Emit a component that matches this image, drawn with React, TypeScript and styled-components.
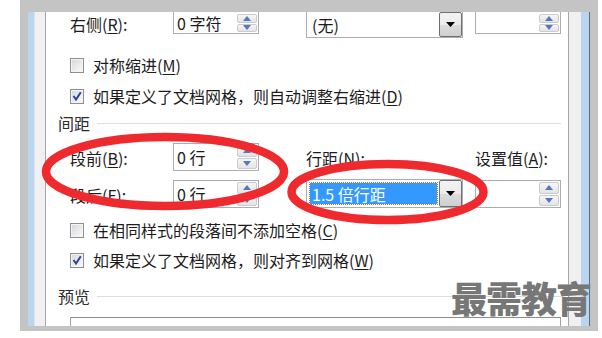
import React from 'react';
import styled, { createGlobalStyle } from 'styled-components';

const Global = createGlobalStyle`
  html, body { margin: 0; padding: 0; background: #fff; }
  body {
    font-family: "Noto Sans CJK SC", "Noto Sans", sans-serif;
    color: #1c1c1c;
  }
`;

const Page = styled.div`
  position: relative;
  width: 602px;
  height: 338px;
  overflow: hidden;
  background: #fff;
`;

const Frame = styled.div`
  margin-left: 20px;
  width: 578px;
  height: 331px;
  box-sizing: border-box;
  padding: 12px 8px 5px 8px;
  background: #c4c4c4;
  display: flex;
`;

const Stripe = styled.div<{ w: number }>`
  width: ${(p) => p.w}px;
  flex: none;
  background: #bad5ef;
`;

const SidePanel = styled.div<{ side: 'left' | 'right' }>`
  flex: none;
  width: ${(p) => (p.side === 'left' ? 10 : 12)}px;
  background: #f0f0f0;
  ${(p) =>
    p.side === 'left'
      ? 'border-right: 1px solid #a6a6a6; border-left: 1px solid #dde2e8;'
      : 'border-left: 1px solid #a6a6a6;'}
`;

const EdgeLine = styled.div`
  width: 1px;
  flex: none;
  background: #5d6b7c;
`;

const Main = styled.div`
  flex: 1;
  background: #fff;
  overflow: hidden;
  padding-left: 12px;
  display: flex;
  flex-direction: column;
  font-size: 16px;
  line-height: 20px;
`;

// the first row's boxes run up under the window's top edge, so that row is shorter
// than its boxes and they hang from its bottom
const FieldGrid = styled.div<{ top: number; row: number }>`
  display: grid;
  grid-template-columns: 103px 86px 47px 157px 12px 86px;
  grid-auto-rows: ${(p) => p.row}px;
  row-gap: 9px;
  align-items: end;
  padding-left: 12px;
  margin-top: ${(p) => p.top}px;
`;

const Label = styled.div<{ col: number }>`
  grid-column: ${(p) => p.col};
  align-self: center;
  white-space: nowrap;
  line-height: 18px;
  padding-top: 1px;
`;

const SpinBox = styled.div<{ col?: number; low?: boolean }>`
  grid-column: ${(p) => p.col ?? 2};
  height: 28px;
  box-sizing: border-box;
  border: 1px solid #abadb3;
  display: flex;
  align-items: center;
  padding-left: 3px;
  padding-top: ${(p) => (p.low ? 6 : 0)}px;
`;

const SpinValue = styled.span`
  flex: 1;
  white-space: nowrap;
  line-height: 18px;
`;

const SpinButtons = styled.div`
  width: 20px;
  margin-right: 1px;
  align-self: stretch;
  padding: 1px 0;
  display: flex;
  flex-direction: column;
  gap: 1px;
`;

const SpinBtn = styled.div`
  flex: 1;
  border: 1px solid #c9cbcf;
  border-radius: 2px;
  background: linear-gradient(#f6f6f6, #e4e4e4);
  display: flex;
  align-items: center;
  justify-content: center;
`;

const Combo = styled.div<{ low?: boolean }>`
  grid-column: 4;
  height: ${(p) => (p.low ? 33 : 29)}px;
  margin-bottom: ${(p) => (p.low ? -4 : 0)}px;
  box-sizing: border-box;
  border: 1px solid #abadb3;
  display: flex;
  align-items: center;
  padding-top: ${(p) => (p.low ? 6 : 0)}px;
`;

const ComboText = styled.div<{ selected?: boolean }>`
  flex: 1;
  align-self: stretch;
  margin: 3px 2px 3px 3px;
  padding-left: 2px;
  display: flex;
  align-items: center;
  white-space: nowrap;
  line-height: 18px;
  color: ${(p) => (p.selected ? '#fff' : 'inherit')};
  background: ${(p) => (p.selected ? '#3399ff' : 'transparent')};
  outline: ${(p) => (p.selected ? '1px dotted #b47a3c' : 'none')};
`;

const ComboBtn = styled.div`
  width: 21px;
  align-self: stretch;
  border: 1px solid #707070;
  border-radius: 2px;
  background: linear-gradient(#f3f3f3, #ebebeb 50%, #dddddd 51%, #cfcfcf);
  display: flex;
  align-items: center;
  justify-content: center;
`;

const CheckRow = styled.div<{ top: number }>`
  display: flex;
  align-items: center;
  height: 20px;
  padding-left: 12px;
  margin-top: ${(p) => p.top}px;
  white-space: nowrap;
`;

const Box = styled.div`
  width: 14px;
  height: 15px;
  box-sizing: border-box;
  border: 1px solid #8e8f8f;
  background: linear-gradient(135deg, #d4d7dc, #fbfbfb);
  box-shadow: inset 0 0 0 1px #f4f4f4;
  margin-right: 9px;
  display: flex;
  align-items: center;
  justify-content: center;
`;

const Heading = styled.div<{ top: number }>`
  display: flex;
  align-items: center;
  height: 20px;
  margin-top: ${(p) => p.top}px;
  margin-right: 7px;
  color: #2b2b2b;
  &::after {
    content: '';
    flex: 1;
    height: 1px;
    margin-left: 7px;
    background: #d5dfe6;
  }
`;

const Preview = styled.div`
  margin: 11px 0 0 12px;
  width: 491px;
  height: 30px;
  flex: none;
  box-sizing: border-box;
  border: 1px solid #a3a3a3;
  border-top-color: #8c8c8c;
`;

const Watermark = styled.div`
  position: absolute;
  left: 451px;
  top: 279px;
  font-size: 36px;
  line-height: 36px;
  font-weight: 900;
  letter-spacing: -1px;
  color: #777;
  white-space: nowrap;
`;

const Marks = styled.svg`
  position: absolute;
  left: 0;
  top: 0;
  pointer-events: none;
`;

const U = styled.u`
  text-underline-offset: 2px;
`;

const Up = () => (
  <svg width="8" height="5" viewBox="0 0 8 5">
    <path d="M0 5 L4 0 L8 5 Z" fill="#5676c2" />
  </svg>
);
const Down = () => (
  <svg width="8" height="5" viewBox="0 0 8 5">
    <path d="M0 0 L8 0 L4 5 Z" fill="#5676c2" />
  </svg>
);
const Caret = () => (
  <svg width="9" height="5" viewBox="0 0 9 5">
    <path d="M0 0 L9 0 L4.5 5 Z" fill="#000" />
  </svg>
);
const Tick = () => (
  <svg width="10" height="10" viewBox="0 0 10 10">
    <path d="M1.5 5 L4 8.5 L8.8 1.2" fill="none" stroke="#2a4496" strokeWidth="2" />
  </svg>
);

const Spin = ({ value, col, low }: { value?: string; col?: number; low?: boolean }) => (
  <SpinBox col={col} low={low}>
    <SpinValue>{value}</SpinValue>
    <SpinButtons>
      <SpinBtn><Up /></SpinBtn>
      <SpinBtn><Down /></SpinBtn>
    </SpinButtons>
  </SpinBox>
);

const Check = ({ checked, children, top }: { checked?: boolean; children: React.ReactNode; top: number }) => (
  <CheckRow top={top}>
    <Box>{checked && <Tick />}</Box>
    {children}
  </CheckRow>
);

export default function App() {
  return (
    <Page>
      <Global />
      <Frame>
        <Stripe w={6} />
        <SidePanel side="left" />
        <Main>
          <FieldGrid top={0} row={22}>
            <Label col={1}>右侧(<U>R</U>):</Label>
            <Spin value="0 字符" low />
            <Combo low>
              <ComboText>(无)</ComboText>
              <ComboBtn><Caret /></ComboBtn>
            </Combo>
            <Spin col={6} low />
          </FieldGrid>
          <Check top={21}>对称缩进(<U>M</U>)</Check>
          <Check top={11} checked>如果定义了文档网格，则自动调整右缩进(<U>D</U>)</Check>
          <Heading top={7}>间距</Heading>
          <FieldGrid top={10} row={28}>
            <Label col={1}>段前(<U>B</U>):</Label>
            <Spin value="0 行" />
            <Label col={4}>行距(<U>N</U>):</Label>
            <Label col={6}>设置值(<U>A</U>):</Label>
            <Label col={1}>段后(<U>F</U>):</Label>
            <Spin value="0 行" />
            <Combo>
              <ComboText selected>1.5 倍行距</ComboText>
              <ComboBtn><Caret /></ComboBtn>
            </Combo>
            <Spin col={6} />
          </FieldGrid>
          <Check top={12}>在相同样式的段落间不添加空格(<U>C</U>)</Check>
          <Check top={10} checked>如果定义了文档网格，则对齐到网格(<U>W</U>)</Check>
          <Heading top={16}>预览</Heading>
          <Preview />
        </Main>
        <SidePanel side="right" />
        <Stripe w={8} />
        <EdgeLine />
      </Frame>
      <Marks width="602" height="338" viewBox="0 0 602 338">
        <ellipse cx="165" cy="171.5" rx="119" ry="34.5" fill="none" stroke="#ef2a2e" strokeWidth="8.5" />
        <ellipse cx="387.5" cy="192" rx="96" ry="28" fill="none" stroke="#ef2a2e" strokeWidth="8.5" />
      </Marks>
      <Watermark>最需教育</Watermark>
    </Page>
  );
}
